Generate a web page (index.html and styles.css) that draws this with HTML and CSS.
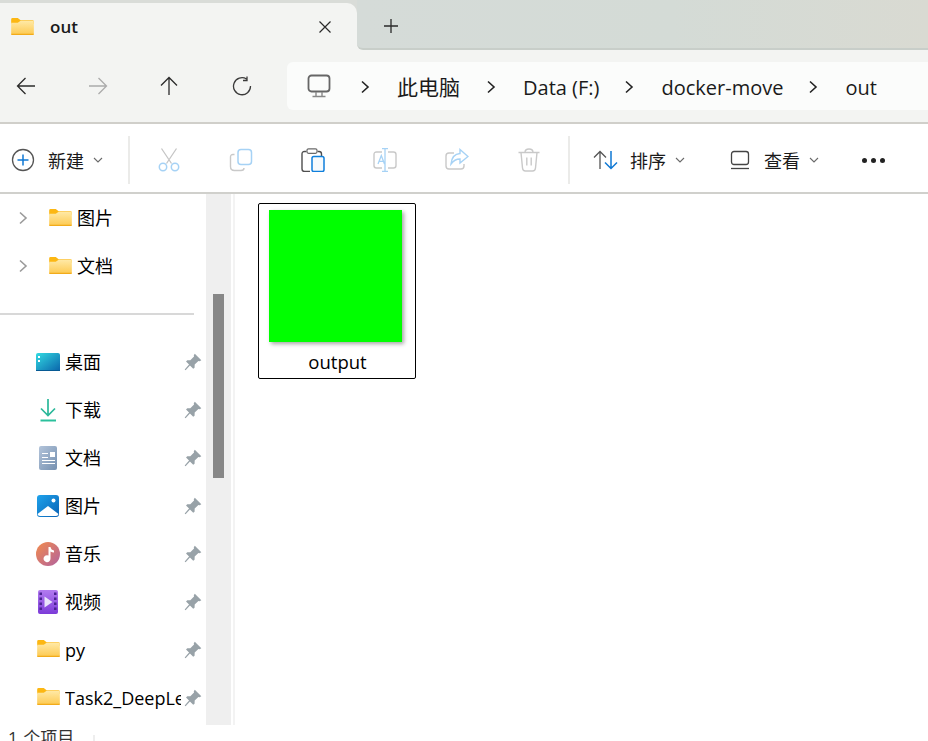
FILE: index.html
```html
<!DOCTYPE html>
<html>
    <head>
        <meta charset="utf-8" />
        <title>out</title>
        <link rel="stylesheet" href="styles.css">
    </head>
    <body>
        <svg class="sprite" width="0" height="0">
            <defs>
                <linearGradient id="g_folder" x1="0" y1="0" x2="0" y2="1">
                    <stop offset="0" stop-color="#ffe9a6" />
                    <stop offset="1" stop-color="#fdc94f" />
                </linearGradient>
                <linearGradient id="g_desktop" x1="0" y1="0" x2="1" y2="1">
                    <stop offset="0" stop-color="#33dbe2" />
                    <stop offset="1" stop-color="#0a64ab" />
                </linearGradient>
                <linearGradient id="g_doc" x1="0" y1="0" x2="1" y2="1">
                    <stop offset="0" stop-color="#b3c4da" />
                    <stop offset="1" stop-color="#7590b0" />
                </linearGradient>
                <linearGradient id="g_pic" x1="0" y1="0" x2="1" y2="1">
                    <stop offset="0" stop-color="#1ea3ec" />
                    <stop offset="1" stop-color="#0b62b4" />
                </linearGradient>
                <linearGradient id="g_music" x1="0" y1="0" x2="1" y2="1">
                    <stop offset="0" stop-color="#f28b4c" />
                    <stop offset="1" stop-color="#b2629f" />
                </linearGradient>
                <linearGradient id="g_video" x1="0" y1="0" x2="0" y2="1">
                    <stop offset="0" stop-color="#b27bf0" />
                    <stop offset="1" stop-color="#7c3bd8" />
                </linearGradient>
                <symbol id="i_folder" viewBox="0 0 24 18">
                    <path d="M0 1.5Q0 0 1.5 0H7L10 2.5H22.500Q24 2.500 24 4V6H0Z" fill="#fcb713" />
                    <path d="M0 17Q0 18 1 18H23Q24 18 24 17V4Q24 3 23 3H10L7 5H0Z" fill="url(#g_folder)" />
                    <path d="M0 17Q0 18 1 18H23Q24 18 24 17V16.700H0Z" fill="#f2ab1a" />
                </symbol>
                <symbol id="i_pin" viewBox="0 0 16 16">
                    <path d="M9.600 .6L15.400 6.400L13.900 7.300L12.800 7L9.500 10.300L9.400 13L8.200 14L5.300 11.100L1.400 15.400L.6 14.600L4.500 10.300L1.800 7.600L2.900 6.500L5.600 6.400L8.900 3.100L8.700 2Z" fill="#98a2a8" />
                </symbol>
                <symbol id="i_chev" viewBox="0 0 10 14">
                    <path d="M2 1.500L8 7L2 12.500" fill="none" stroke="currentColor" stroke-width="1.600" />
                </symbol>
                <symbol id="i_drop" viewBox="0 0 10 6">
                    <path d="M1 1L5 5L9 1" fill="none" stroke="#6a6a6a" stroke-width="1.100" />
                </symbol>
            </defs>
        </svg>

        <div class="tabbar">
            <div class="tab_slot">
                <div class="tab">
                    <svg class="tab_folder"><use href="#i_folder" /></svg>
                    <span class="tab_title">out</span>
                    <svg class="tab_close" viewBox="0 0 14 14"><path d="M1.500 1.500L12.500 12.500M12.500 1.500L1.500 12.500" stroke="#2a2a2a" stroke-width="1.200" /></svg>
                </div>
            </div>
            <div class="tab_rest">
                <svg class="tab_plus" viewBox="0 0 16 16"><path d="M8 1V15M1 8H15" stroke="#2a2a2a" stroke-width="1.300" /></svg>
            </div>
        </div>

        <div class="navbar">
            <div class="nav_btns">
                <svg class="nav_icon" viewBox="0 0 20 20"><path d="M1.500 10H19M9.500 2L1.500 10L9.500 18" fill="none" stroke="#2b2b2b" stroke-width="1.300" /></svg>
                <svg class="nav_icon" viewBox="0 0 20 20"><path d="M1 10H18.500M10.500 2L18.500 10L10.500 18" fill="none" stroke="#ababab" stroke-width="1.300" /></svg>
                <svg class="nav_icon" viewBox="0 0 20 20"><path d="M9 19V1.500M1 9.500L9 1.500L17 9.500" fill="none" stroke="#2b2b2b" stroke-width="1.300" /></svg>
                <svg class="nav_icon" viewBox="0 0 20 20"><path d="M14.500 3A8.500 8.500 0 1 0 18.500 10M15 .5V4.500H11" fill="none" stroke="#3a3a3a" stroke-width="1.300" /></svg>
            </div>
            <div class="address">
                <svg class="pc_icon" viewBox="0 0 24 24"><rect x="1.500" y="1.500" width="21" height="16" rx="3" fill="none" stroke="#666" stroke-width="1.800" /><path d="M9 18V22M15 18V22M5.500 22.500H18.500" stroke="#888" stroke-width="1.400" /></svg>
                <svg class="crumb_chev"><use href="#i_chev" /></svg>
                <span class="crumb crumb_cjk">此电脑</span>
                <svg class="crumb_chev"><use href="#i_chev" /></svg>
                <span class="crumb">Data (F:)</span>
                <svg class="crumb_chev"><use href="#i_chev" /></svg>
                <span class="crumb">docker-move</span>
                <svg class="crumb_chev"><use href="#i_chev" /></svg>
                <span class="crumb">out</span>
            </div>
        </div>

        <div class="toolbar">
            <div class="tool_new">
                <svg class="tool_icon" viewBox="0 0 24 24"><circle cx="12" cy="12" r="10.500" fill="none" stroke="#555" stroke-width="1.300" /><path d="M12 6.500V17.500M6.500 12H17.500" stroke="#0f78d4" stroke-width="1.500" /></svg>
                <span class="tool_label">新建</span>
                <svg class="tool_drop"><use href="#i_drop" /></svg>
            </div>
            <div class="tool_sep"></div>
            <div class="tool_btn">
                <svg class="tool_icon" viewBox="0 0 24 24"><path d="M4.500 .5L14.500 15.500M19.500 .5L9.500 15.500" stroke="#c6c6c6" stroke-width="1.300" /><circle cx="6" cy="19" r="3.700" fill="none" stroke="#a6d2f5" stroke-width="1.500" /><circle cx="18" cy="19" r="3.700" fill="none" stroke="#a6d2f5" stroke-width="1.500" /></svg>
            </div>
            <div class="tool_btn">
                <svg class="tool_icon" viewBox="0 0 24 24"><path d="M5.500 6.500H4Q1.500 6.500 1.500 9V18.500Q1.500 22.500 5.500 22.500H12Q15 22.500 15 20" fill="none" stroke="#c9c9c9" stroke-width="1.400" /><rect x="9" y="1.500" width="13.500" height="15" rx="3" fill="none" stroke="#a6d2f5" stroke-width="1.500" /></svg>
            </div>
            <div class="tool_btn">
                <svg class="tool_icon" viewBox="0 0 24 24"><path d="M5.500 3.500H3.500Q1 3.500 1 6V21Q1 23.500 3.500 23.500H9M16.500 3.500H18Q20.500 3.500 20.500 6V8" fill="none" stroke="#4f4f4f" stroke-width="1.400" /><rect x="6" y=".8" width="10" height="4.500" rx="1.500" fill="none" stroke="#6a6a6a" stroke-width="1.200" /><rect x="11" y="8.500" width="12" height="15" rx="1.800" fill="#f6fafd" stroke="#0f7fdc" stroke-width="1.500" /></svg>
            </div>
            <div class="tool_btn">
                <svg class="tool_icon" viewBox="0 0 24 24"><path d="M9 4H3.500Q1 4 1 6.500V17.500Q1 20 3.500 20H9M15 4H20.500Q23 4 23 6.500V17.500Q23 20 20.500 20H15" fill="none" stroke="#c9c9c9" stroke-width="1.400" /><path d="M9 .5H15M12 .5V23.500M9 23.500H15M5 16L8.300 7.500L11.500 16M6 13.300H10.500" fill="none" stroke="#a6d2f5" stroke-width="1.300" /></svg>
            </div>
            <div class="tool_btn">
                <svg class="tool_icon" viewBox="0 0 24 24"><path d="M9 5H4Q1 5 1 8V18Q1 21 4 21H16Q19 21 19 18V16" fill="none" stroke="#c9c9c9" stroke-width="1.400" /><path d="M15 1.500L23 8.500L15 15V11Q9.500 11 6 16Q7 6 15 5.500Z" fill="none" stroke="#a6d2f5" stroke-width="1.400" /></svg>
            </div>
            <div class="tool_btn">
                <svg class="tool_icon" viewBox="0 0 24 24"><path d="M1.500 4.500H22.500M8 4.500Q8 1 12 1T16 4.500M4 4.500L5.500 20Q5.700 23 8.500 23H15.500Q18.300 23 18.500 20L20 4.500M9.800 9.500V17.500M14.200 9.500V17.500" fill="none" stroke="#c9c9c9" stroke-width="1.400" /></svg>
            </div>
            <div class="tool_sep tool_sep_b"></div>
            <div class="tool_group">
                <svg class="sort_icon" viewBox="0 0 26 20"><path d="M7 19V1.500M1 7.500L7 1.500L13 7.500" fill="none" stroke="#555" stroke-width="1.300" /><path d="M18 1V18.500M12 12.500L18 18.500L24 12.500" fill="none" stroke="#0f78d4" stroke-width="1.500" /></svg>
                <span class="tool_label">排序</span>
                <svg class="tool_drop"><use href="#i_drop" /></svg>
            </div>
            <div class="tool_group tool_group_view">
                <svg class="view_icon" viewBox="0 0 20 20"><rect x="1.500" y="1.500" width="17" height="13" rx="2.500" fill="none" stroke="#444" stroke-width="1.300" /><path d="M1 18.500H19" stroke="#444" stroke-width="1.300" /></svg>
                <span class="tool_label">查看</span>
                <svg class="tool_drop"><use href="#i_drop" /></svg>
            </div>
            <div class="tool_more"><i></i><i></i><i></i></div>
        </div>

        <div class="main">
            <div class="sidebar">
                <div class="tree_row">
                    <svg class="tree_chev"><use href="#i_chev" /></svg>
                    <svg class="tree_folder"><use href="#i_folder" /></svg>
                    <span class="cjk">图片</span>
                </div>
                <div class="tree_row">
                    <svg class="tree_chev"><use href="#i_chev" /></svg>
                    <svg class="tree_folder"><use href="#i_folder" /></svg>
                    <span class="cjk">文档</span>
                </div>
                <div class="side_divider"></div>

                <div class="pin_row">
                    <svg class="pin_icon" viewBox="0 0 24 24"><path d="M0 5Q0 3 2 3H22Q24 3 24 5V20Q24 21 23 21H1Q0 21 0 20Z" fill="url(#g_desktop)" /><path d="M2 6H4V8H2ZM2 10H4V12H2Z" fill="#fff" /><path d="M0 20H24V21H0Z" fill="#075a94" /></svg>
                    <span class="pin_name cjk">桌面</span>
                    <svg class="pin"><use href="#i_pin" /></svg>
                </div>
                <div class="pin_row">
                    <svg class="pin_icon" viewBox="0 0 24 24"><path d="M12 1V17M5 10.500L12 17.500L19 10.500" fill="none" stroke="#2bb89a" stroke-width="1.700" /><path d="M4.500 22.500H20" stroke="#2bc09c" stroke-width="2" /></svg>
                    <span class="pin_name cjk">下载</span>
                    <svg class="pin"><use href="#i_pin" /></svg>
                </div>
                <div class="pin_row">
                    <svg class="pin_icon" viewBox="0 0 24 24"><rect x="3" y="0" width="18" height="24" rx="2" fill="url(#g_doc)" /><path d="M6 7H12V8H6ZM6 11H12V12H6ZM6 14H19V15H6ZM6 17H19V18H6Z" fill="#fff" /><rect x="14" y="6" width="5" height="5" fill="#fff" /></svg>
                    <span class="pin_name cjk">文档</span>
                    <svg class="pin"><use href="#i_pin" /></svg>
                </div>
                <div class="pin_row">
                    <svg class="pin_icon" viewBox="0 0 24 24"><rect x="1" y="1" width="22" height="22" rx="3" fill="url(#g_pic)" /><circle cx="17.500" cy="6.500" r="2" fill="#fff" /><path d="M1.500 20L12 12L22.500 20Q22 22 20 22H4Q2 22 1.500 20Z" fill="#fff" /></svg>
                    <span class="pin_name cjk">图片</span>
                    <svg class="pin"><use href="#i_pin" /></svg>
                </div>
                <div class="pin_row">
                    <svg class="pin_icon" viewBox="0 0 24 24"><circle cx="12" cy="12" r="12" fill="url(#g_music)" /><path d="M12.500 5H14.500Q15 8 18 8.500V10.500Q16 10.500 14.500 9.500V16.500A3.500 3.500 0 1 1 12.500 13.500Z" fill="#fff" /></svg>
                    <span class="pin_name cjk">音乐</span>
                    <svg class="pin"><use href="#i_pin" /></svg>
                </div>
                <div class="pin_row">
                    <svg class="pin_icon" viewBox="0 0 24 24"><rect x="2" y="0" width="20" height="24" rx="2" fill="url(#g_video)" /><path d="M3.500 2.500H6V5H3.500ZM3.500 7.500H6V10H3.500ZM3.500 12.500H6V15H3.500ZM3.500 17.500H6V20H3.500ZM18 2.500H20.500V5H18ZM18 7.500H20.500V10H18ZM18 12.500H20.500V15H18ZM18 17.500H20.500V20H18Z" fill="#4a2392" /><path d="M8.500 6.500L16.500 12L8.500 17.500Z" fill="#e9e4fb" /></svg>
                    <span class="pin_name cjk">视频</span>
                    <svg class="pin"><use href="#i_pin" /></svg>
                </div>
                <div class="pin_row">
                    <svg class="pin_folder"><use href="#i_folder" /></svg>
                    <span class="pin_name">py</span>
                    <svg class="pin"><use href="#i_pin" /></svg>
                </div>
                <div class="pin_row">
                    <svg class="pin_folder"><use href="#i_folder" /></svg>
                    <span class="pin_name">Task2_DeepLearning</span>
                    <svg class="pin"><use href="#i_pin" /></svg>
                </div>
            </div>
            <div class="side_scroll">
                <div class="side_thumb"></div>
            </div>
            <div class="files">
                <div class="file_item">
                    <div class="file_thumb"></div>
                    <div class="file_name">output</div>
                </div>
            </div>
        </div>

        <div class="statusbar">
            <span>1 个项目</span>
            <div class="status_sep"></div>
        </div>
    </body>
</html>
```

FILE: styles.css
```css
html, body {
    width: 928px;
    height: 741px;
    margin: 0px;
    overflow: hidden;
}

body {
    display: flex;
    flex-direction: column;
    background-color: white;
    color: #1a1a1a;
    font-family: "Open Sans", "Noto Sans CJK SC", sans-serif;
    font-size: 18px;
}

.sprite {
    position: absolute;
}

/* tabs */

.tabbar {
    display: flex;
    height: 50px;
    background-color: #f3f4f2;
}

.tab_slot {
    width: 357px;
    padding-top: 3px;
    box-sizing: border-box;
    background-color: #d9dcd8;
}

.tab {
    display: flex;
    align-items: center;
    height: 47px;
    box-sizing: border-box;
    border-top-right-radius: 10px;
    background-color: #f3f4f2;
}

.tab_folder {
    width: 23px;
    height: 17px;
    margin: 0px 16px 1px 11px;
}

.tab_title {
    flex: 1;
    font-weight: 600;
    font-size: 17px;
}

.tab_close {
    width: 14px;
    height: 14px;
    margin: 0px 25px 0px 0px;
}

.tab_rest {
    flex: 1;
    display: flex;
    align-items: center;
    box-sizing: border-box;
    border-bottom: 2px solid #c8cec9;
    border-bottom-left-radius: 6px;
    background: linear-gradient(90deg, #d5dbd8, #d4dbd6 55%, #d9dad2);
}

.tab_plus {
    width: 16px;
    height: 16px;
    margin: 3px 0px 0px 26px;
}

/* nav row */

.navbar {
    display: flex;
    align-items: center;
    height: 72px;
    box-sizing: border-box;
    background-color: #f3f4f2;
}

.nav_btns {
    display: flex;
    gap: 52px;
    width: 287px;
    padding-left: 16px;
    box-sizing: border-box;
}

.nav_icon {
    width: 20px;
    height: 20px;
}

.address {
    flex: 1;
    display: flex;
    align-items: center;
    height: 48px;
    padding-top: 2px;
    box-sizing: border-box;
    border-radius: 6px 0px 0px 6px;
    background-color: #fbfcfb;
    font-size: 20px;
}

.pc_icon {
    width: 24px;
    height: 24px;
    margin: 0px 4px 2px 20px;
}

.crumb_chev {
    width: 10px;
    height: 14px;
    margin: 0px 27px 0px 25px;
    color: #222;
}

.crumb {
    white-space: nowrap;
}

.crumb_cjk {
    margin: 0px 1px 3px 0px;
    font-size: 21px;
}

/* command bar */

.toolbar {
    display: flex;
    align-items: center;
    height: 72px;
    padding-top: 4px;
    border-top: 2px solid #d0cfca;
    border-bottom: 2px solid #d0d0cc;
    box-sizing: border-box;
}

.tool_new {
    display: flex;
    align-items: center;
    width: 128px;
    padding-left: 11px;
    box-sizing: border-box;
}

.tool_icon {
    width: 24px;
    height: 24px;
    flex: none;
}

.tool_label {
    font-size: 18px;
    white-space: nowrap;
}

.tool_new .tool_label {
    margin-left: 13px;
}

.tool_drop {
    width: 10px;
    height: 6px;
    margin-left: 9px;
}

.tool_sep {
    width: 2px;
    height: 48px;
    margin-right: 3px;
    background-color: #ebebe9;
}

.tool_btn {
    display: flex;
    justify-content: center;
    width: 72px;
}

.tool_sep_b {
    margin-left: 3px;
    margin-right: 0px;
}

.tool_group {
    display: flex;
    align-items: center;
    margin-left: 23px;
}

.tool_group_view {
    margin-left: 45px;
}

.sort_icon {
    width: 26px;
    height: 20px;
    margin-right: 11px;
}

.view_icon {
    width: 20px;
    height: 20px;
    margin-right: 14px;
}

.tool_more {
    display: flex;
    gap: 4px;
    margin-left: 43px;
}

.tool_more i {
    width: 5px;
    height: 5px;
    border-radius: 50%;
    background-color: #222;
}

/* main */

.main {
    display: flex;
    height: 531px;
}

.sidebar {
    width: 206px;
    overflow: hidden;
    color: #000;
}

.tree_row, .pin_row {
    display: flex;
    align-items: center;
    height: 48px;
    white-space: nowrap;
}

.cjk {
    margin-bottom: 2px;
}

.tree_chev {
    width: 10px;
    height: 14px;
    margin-left: 18px;
    color: #9a9a9a;
}

.tree_folder {
    width: 23px;
    height: 17px;
    margin: 0px 5px 2px 21px;
}

.side_divider {
    height: 2px;
    margin: 23px 12px 23px 0px;
    width: 194px;
    background-color: #d8d8d8;
}

.pin_row {
    position: relative;
}

.pin_icon {
    width: 24px;
    height: 24px;
    margin: 0px 5px 0px 36px;
    flex: none;
}

.pin_folder {
    width: 23px;
    height: 17px;
    margin: 0px 5px 3px 37px;
    flex: none;
}

.pin_name {
    width: 116px;
    overflow: hidden;
}

.pin {
    position: absolute;
    left: 184px;
    top: 15px;
    width: 18px;
    height: 18px;
}

.side_scroll {
    width: 25px;
    padding: 100px 7px 0px;
    box-sizing: border-box;
    background-color: #efefef;
}

.side_thumb {
    height: 184px;
    background-color: #878787;
}

.files {
    flex: 1;
    margin-left: 2px;
    padding: 9px 0px 0px 23px;
    border-left: 2px solid #f3f3f3;
}

.file_item {
    width: 158px;
    height: 176px;
    padding: 6px 0px 0px 10px;
    box-sizing: border-box;
    border: 1px solid black;
    border-radius: 2px;
}

.file_thumb {
    width: 133px;
    height: 132px;
    background-color: #00ff00;
    box-shadow: 2px 2px 4px rgba(0, 0, 0, 0.35);
}

.file_name {
    width: 137px;
    margin-top: 7px;
    text-align: center;
    font-size: 18.500px;
    color: #000;
}

/* status */

.statusbar {
    display: flex;
    height: 16px;
    padding-left: 8px;
    overflow: hidden;
    font-size: 17px;
    line-height: 24px;
    color: #333;
}

.statusbar span {
    width: 85px;
    margin-top: 1px;
    word-spacing: 1px;
    white-space: nowrap;
}

.status_sep {
    width: 2px;
    margin-top: 10px;
    background-color: #eeeeee;
}
```
